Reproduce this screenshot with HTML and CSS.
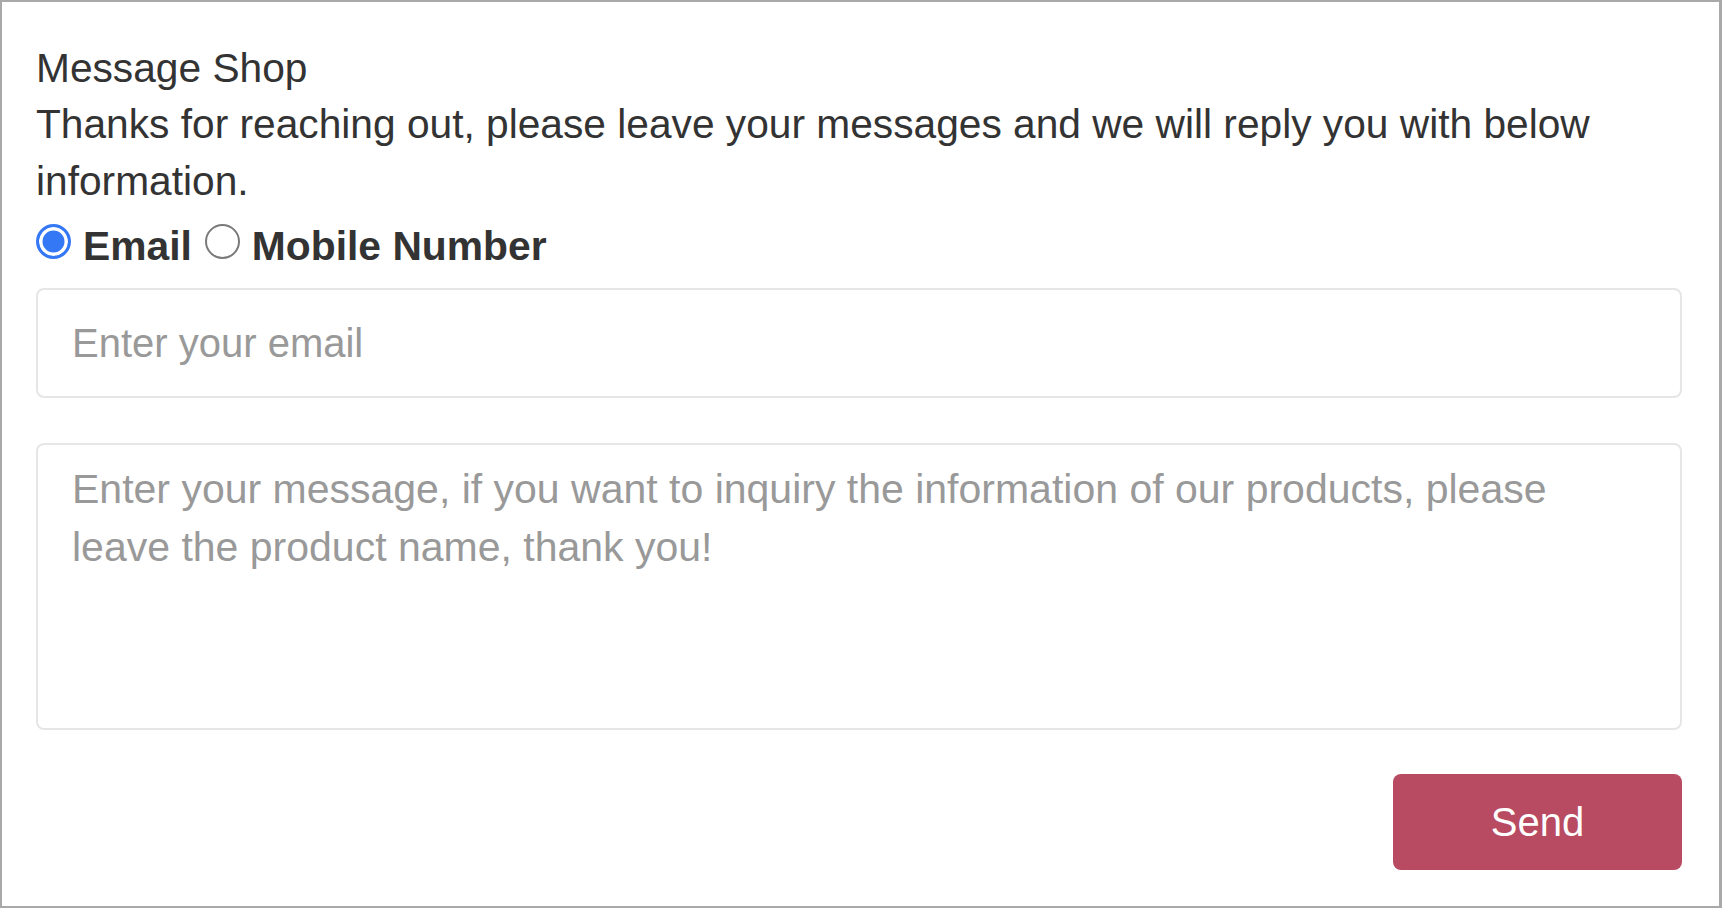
FILE: index.html
```html
<!DOCTYPE html>
<html lang="en">
<head>
<meta charset="utf-8">
<title>Message Shop</title>
<link rel="stylesheet" href="styles.css">
</head>
<body>
<div class="frame">
  <form class="msg-form">
    <p class="title">Message Shop</p>
    <p class="intro">Thanks for reaching out, please leave your messages and we will reply you with below information.</p>
    <div class="contact-type">
      <label class="choice"><input type="radio" name="ctype" class="radio" checked><span>Email</span></label>
      <label class="choice"><input type="radio" name="ctype" class="radio"><span>Mobile Number</span></label>
    </div>
    <input type="text" class="field field-email" placeholder="Enter your email">
    <textarea class="field field-message" placeholder="Enter your message, if you want to inquiry the information of our products, please leave the product name, thank you!"></textarea>
    <div class="actions">
      <button type="button" class="send">Send</button>
    </div>
  </form>
</div>
</body>
</html>
```

FILE: styles.css
```css
* { box-sizing: border-box; }

html, body {
  margin: 0;
  padding: 0;
  background: #fff;
}

body {
  font-family: "Liberation Sans", Arial, Helvetica, sans-serif;
  color: #333;
}

.frame {
  width: 1722px;
  height: 908px;
  border: 2px solid #a9a9a9;
  border-right-width: 3px;
  padding: 37.5px 37px 0 34px;
}

.msg-form {
  display: flex;
  flex-direction: column;
}

.title,
.intro {
  margin: 0;
  font-size: 40.7px;
  line-height: 56.7px;
}

.contact-type {
  display: flex;
  align-items: flex-start;
  margin-top: 8px;
  height: 56.7px;
  font-size: 40.8px;
  line-height: 56.7px;
  font-weight: bold;
}

.choice {
  display: flex;
  align-items: flex-start;
  gap: 12px;
  margin-right: 13px;
}

.radio {
  appearance: none;
  -webkit-appearance: none;
  margin: 6px 0 0 0;
  width: 35px;
  height: 35px;
  border-radius: 50%;
  border: 2.5px solid #7a7a7a;
  background: #fff;
  flex: none;
}

.radio:checked {
  border: 3px solid #3478f6;
  background: #3478f6;
  box-shadow: inset 0 0 0 3.5px #fff;
}

.field {
  display: block;
  width: 100%;
  border: 2px solid #e6e6e6;
  border-radius: 8px;
  background: #fff;
  font-family: "Liberation Sans", Arial, Helvetica, sans-serif;
  font-size: 40px;
  color: #333;
  outline: none;
}

.field::placeholder {
  color: #999;
  opacity: 1;
}

.field-email {
  margin-top: 14px;
  height: 110px;
  padding: 0 32px 0 34px;
}

.field-message {
  margin-top: 45px;
  height: 287px;
  padding: 16px 90px 16px 34px;
  font-size: 41px;
  line-height: 57.7px;
  resize: none;
}

.actions {
  display: flex;
  justify-content: flex-end;
  margin-top: 44px;
}

.send {
  width: 289px;
  height: 96px;
  border: none;
  border-radius: 8px;
  background: #b84b61;
  color: #fff;
  font-family: "Liberation Sans", Arial, Helvetica, sans-serif;
  font-size: 40px;
}
```
